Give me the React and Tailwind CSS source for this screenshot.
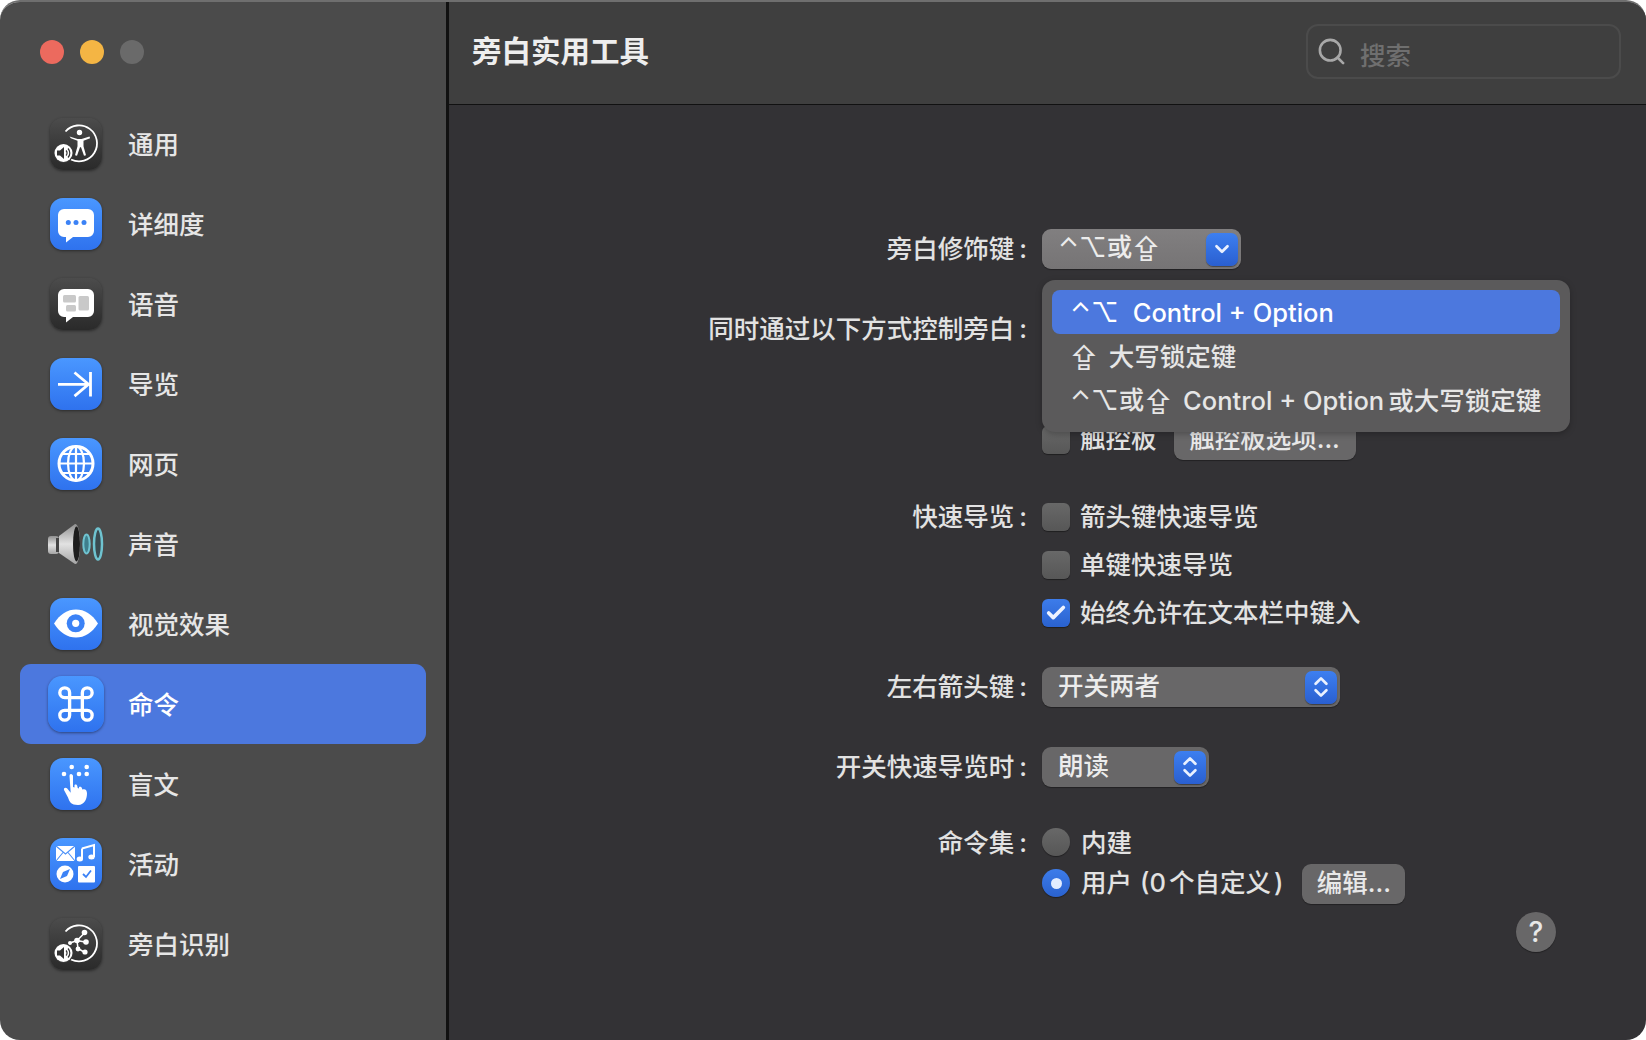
import React from "react";
import { ChevronDown, ChevronsUpDown, Check, Search } from "lucide-react";

const blue = "bg-linear-to-b from-[#4a97ff] to-[#2f72ee]";
const dark = "bg-linear-to-b from-[#4c4c4c] to-[#2a2a2a]";

const Shell = ({ tone, big, children }) => (
  <div className={`${tone} ${big ? "w-[56px] h-[56px] -m-[2px] rounded-[14px]" : "w-[52px] h-[52px] rounded-[13px]"} shrink-0 shadow-[0_1px_3px_rgba(0,0,0,0.45)]`}>
    <svg viewBox="0 0 52 52" className="w-full h-full" fill="none">{children}</svg>
  </div>
);

const Badge = () => (
  <g>
    <circle cx="13.5" cy="35" r="10" fill="#3a3a3a" />
    <circle cx="13.5" cy="35" r="9" fill="#fff" />
    <path d="M7 32.5h3l4-3.5v12l-4-3.5H7z" fill="#333" />
    <path d="M16 32.5a3.5 3.5 0 0 1 0 5M18 30.5a6.5 6.5 0 0 1 0 9" stroke="#333" strokeWidth="1.2" />
  </g>
);

const Ring = () => <path d="M15.5 13.5A18 18 0 1 1 21 41.5" stroke="#fff" strokeWidth="1.8" />;

const IconGeneral = () => (
  <Shell tone={dark}>
    <Ring />
    <circle cx="29.5" cy="14.5" r="2.7" fill="#fff" />
    <path d="M19.500 18.500l8 2.500h4l8-2.500.600 1.800-6.600 2.500v5.500l2.500 9-2 .500-3-8.500h-1l-3 8.500-2-.500 2.500-9v-5.500l-6.600-2.500z" fill="#fff" />
    <Badge />
  </Shell>
);

const Bubble = () => (
  <path d="M14 11h24a6 6 0 0 1 6 6v16a6 6 0 0 1-6 6H23l-7 5.5V39h-2a6 6 0 0 1-6-6V17a6 6 0 0 1 6-6z" fill="#fff" />
);

const IconVerbosity = () => (
  <Shell tone={blue}>
    <Bubble />
    <circle cx="18.3" cy="24.5" r="2.5" fill="#3b82f6" />
    <circle cx="26" cy="24.5" r="2.5" fill="#3b82f6" />
    <circle cx="34" cy="24.5" r="2.5" fill="#3b82f6" />
  </Shell>
);

const IconSpeech = () => (
  <Shell tone={dark}>
    <Bubble />
    <rect x="13" y="17" width="13" height="7.5" rx="1.5" fill="#c9c9c9" />
    <rect x="16" y="27" width="10" height="6.5" rx="1.5" fill="#c9c9c9" />
    <rect x="28.5" y="18" width="10.5" height="14.5" rx="1.5" fill="#c9c9c9" />
  </Shell>
);

const IconNavigation = () => (
  <Shell tone={blue}>
    <path d="M8 26.3h30M24.5 14.5l14 11.8-14 11.8M40.5 14v24.5" stroke="#fff" strokeWidth="2.8" />
  </Shell>
);

const IconWeb = () => (
  <Shell tone={blue}>
    <circle cx="26" cy="25.5" r="17" stroke="#fff" strokeWidth="3" />
    <ellipse cx="26" cy="25.5" rx="8" ry="17" stroke="#fff" strokeWidth="2.2" />
    <path d="M26 8.5v34M9 25.5h34M12 16h28M12 35h28" stroke="#fff" strokeWidth="2.2" />
  </Shell>
);

const IconSound = () => (
  <svg viewBox="0 0 56 42" className="w-[56px] h-[42px] shrink-0 -mx-[2px]" fill="none">
    <defs>
      <linearGradient id="cone" x1="0" y1="0" x2="0" y2="1">
        <stop offset="0" stopColor="#8f8f8f" />
        <stop offset="0.5" stopColor="#e2e2e2" />
        <stop offset="1" stopColor="#a5a5a5" />
      </linearGradient>
    </defs>
    <rect x="0" y="13" width="11" height="18" rx="3" fill="url(#cone)" />
    <rect x="8" y="15" width="4" height="14" fill="#444" />
    <path d="M11 13L27 1c3-1 5 9 5 20s-2 21-5 20L11 30z" fill="url(#cone)" />
    <ellipse cx="28.500" cy="21" rx="3.500" ry="17.500" fill="#1d1d1d" />
    <ellipse cx="38.500" cy="21" rx="3.200" ry="9.500" fill="#3f7f8c" stroke="#6fc3d0" strokeWidth="2" />
    <ellipse cx="50" cy="21" rx="4" ry="15.500" fill="#3a4a50" stroke="#6fc3d0" strokeWidth="2.500" />
  </svg>
);

const IconVisual = () => (
  <Shell tone={blue}>
    <path d="M4 25.5C10 16 17.5 11.5 26 11.5s16 4.500 22 14c-6 9.500-13.500 14-22 14s-16-4.500-22-14z" fill="#fff" />
    <circle cx="25.700" cy="25.300" r="9" fill="#3b82f6" />
    <circle cx="25.700" cy="25.300" r="3.600" fill="#fff" />
  </Shell>
);

const IconCommands = () => (
  <Shell tone={blue} big>
    <path d="M21.500 21.500h13v13h-13zM21.500 21.500h-5a5 5 0 1 1 5-5zM34.500 21.500v-5a5 5 0 1 1 5 5zM34.500 34.500h5a5 5 0 1 1-5 5zM21.500 34.500v5a5 5 0 1 1-5-5z" transform="translate(.500 .500) scale(0.91)" stroke="#fff" strokeWidth="3.400" />
  </Shell>
);

const IconBraille = () => (
  <Shell tone={blue}>
    {[[21.7, 9], [36.7, 9], [14, 16], [29, 16], [36.7, 16]].map(([x, y]) => (
      <circle key={x + "" + y} cx={x} cy={y} r="2.300" fill="#fff" />
    ))}
    <path d="M21 16c1 0 2 1 2 2v11l1.500.5V27c1.500-1 2.500 0 2.800 1l.4 2 1.300.5V29c1.500-.8 2.700 0 3 1.300l.3 1.200 1-.2c2-.6 3.700 1 3.700 4 0 5-2 11.700-9 11.700s-8.500-3-10-7.500l-4-7.500c-.5-2 1.500-3 3-1.700l3.700 4.500L19.500 18c0-1.200.5-2 1.500-2z" fill="#fff" />
  </Shell>
);

const IconActivities = () => (
  <Shell tone={blue}>
    <rect x="6" y="8" width="19" height="15" rx="1" fill="#fff" />
    <path d="M6 8l9.500 8L25 8M6 23l7-8.500M25 23l-7-8.500" stroke="#4a90f8" strokeWidth="1.100" />
    <path d="M32 10.500l12-3.500v12" stroke="#fff" strokeWidth="2" />
    <path d="M32 10.500V21" stroke="#fff" strokeWidth="2" />
    <ellipse cx="29.800" cy="21" rx="3.200" ry="2.500" fill="#fff" />
    <ellipse cx="41.500" cy="19" rx="3.200" ry="2.500" fill="#fff" />
    <circle cx="15" cy="36" r="8.500" fill="#fff" />
    <path d="M20 31l-3 7-7 3 3-7z" fill="#3b82f6" />
    <rect x="28" y="28" width="17" height="16.500" rx="1" fill="#fff" />
    <path d="M33 36l3 3 5-6.500" stroke="#3b82f6" strokeWidth="1.800" />
  </Shell>
);

const IconRecognition = () => (
  <Shell tone={dark}>
    <Ring />
    <path d="M20 25l7-2.500 7-7M27 22.500l8 1.500M27 22.500l1 8 6 3.500" stroke="#fff" strokeWidth="1.500" />
    {[[27, 22.500, 2.800], [34.500, 14.500, 2.800], [36, 24, 2.800], [28, 31, 2.400], [35, 34, 2.600], [20, 25, 2]].map(([x, y, r]) => (
      <circle key={x} cx={x} cy={y} r={r} fill="#fff" />
    ))}
    <Badge />
  </Shell>
);

const sidebarItems = [
  { name: "通用", Icon: IconGeneral },
  { name: "详细度", Icon: IconVerbosity },
  { name: "语音", Icon: IconSpeech },
  { name: "导览", Icon: IconNavigation },
  { name: "网页", Icon: IconWeb },
  { name: "声音", Icon: IconSound },
  { name: "视觉效果", Icon: IconVisual },
  { name: "命令", Icon: IconCommands, active: true },
  { name: "盲文", Icon: IconBraille },
  { name: "活动", Icon: IconActivities },
  { name: "旁白识别", Icon: IconRecognition },
];

const Sym = ({ children }) => <span className="font-['Inter'] text-[27px] leading-none font-normal">{children}</span>;

const Checkbox = ({ checked }) => (
  <div className={`w-[28px] h-[28px] rounded-[6px] shrink-0 flex items-center justify-center shadow-[0_1px_1px_rgba(0,0,0,0.4)] bg-linear-to-b ${checked ? "from-[#3d7cea] to-[#2a62cf]" : "from-[#686868] to-[#575757]"}`}>
    {checked && <Check size={22} strokeWidth={4} className="text-[#eef3ff]" />}
  </div>
);

const Radio = ({ checked }) => (
  <div className={`w-[28px] h-[28px] rounded-full shrink-0 mb-0.5 flex items-center justify-center shadow-[0_1px_1px_rgba(0,0,0,0.4)] bg-linear-to-b ${checked ? "from-[#3d7cea] to-[#2a62cf]" : "from-[#686868] to-[#575757]"}`}>
    {checked && <div className="w-[11px] h-[11px] rounded-full bg-[#e2ecff]" />}
  </div>
);

const Button = ({ children, className = "" }) => (
  <div className={`h-10 rounded-[9px] bg-[#686768] flex items-center justify-center text-[#e8e8e8] shadow-[0_1px_1px_rgba(0,0,0,0.35)] ${className}`}>
    <span className="-mt-0.5">{children}</span>
  </div>
);

const Select = ({ value, width, open }) => (
  <div className={`${width} ${open ? "bg-linear-to-b from-[#817f80] to-[#767475]" : "bg-[#686768]"} h-10 rounded-[9px] flex items-center justify-between pl-[16px] pr-[3.500px] shadow-[0_1px_1px_rgba(0,0,0,0.35)]`}>
    <span className={`text-[#ececec] flex items-center ${open ? "-mt-1" : "-mt-0.5"}`}>{value}</span>
    <div className="w-[32px] h-[33px] rounded-[7px] bg-linear-to-b from-[#3d7ff0] to-[#2a5fd0] flex items-center justify-center shadow-[0_1px_1px_rgba(0,0,0,0.4)]">
      {open ? <ChevronDown size={22} strokeWidth={3} className="text-[#eaf1ff]" /> : <ChevronsUpDown size={26} strokeWidth={2.500} className="text-[#eaf1ff]" />}
    </div>
  </div>
);

const Label = ({ text, leading }) => (
  <div className={`w-[581px] shrink-0 text-right text-[#e2e2e2] pr-[3px] ${leading}`}>
    {text}<span className="ml-[5px]">:</span>
  </div>
);

const Row = ({ label, className = "", children }) => (
  <div className={`flex ${className}`}>
    <Label text={label} leading="leading-10" />
    <div className="ml-3">{children}</div>
  </div>
);

const Item = ({ checked, children }) => (
  <div className="flex items-center gap-[10px] h-[28px] text-[#e2e2e2]">
    <Checkbox checked={checked} />
    <span className="pt-px">{children}</span>
  </div>
);

export default function App() {
  return (
    <div className="w-[1646px] h-[1040px] bg-white font-['Inter','Noto_Sans_CJK_SC',sans-serif] text-[25.500px] font-medium">
      <div className="w-full h-full flex rounded-[20px] overflow-hidden border-t-2 border-[#6f6f6f]">
        <aside className="w-[449px] shrink-0 bg-[#4b4b4b] border-r-[3px] border-[#111] px-5 pt-[38px]">
          <div className="flex gap-4 pl-5 mb-10">
            <div className="w-6 h-6 rounded-full bg-[#ec6a5e]" />
            <div className="w-6 h-6 rounded-full bg-[#f4b544]" />
            <div className="w-6 h-6 rounded-full bg-[#6a6a6a]" />
          </div>
          {sidebarItems.map(({ name, Icon, active }) => (
            <div key={name} className={`h-20 flex items-center pl-[30px] gap-[26px] rounded-[11px] ${active ? "bg-[#4c78de] text-white" : "text-[#e6e6e6]"}`}>
              <Icon />
              <span className="pt-[3px]">{name}</span>
            </div>
          ))}
        </aside>

        <main className="flex-1 bg-[#333235] flex flex-col">
          <header className="h-[103px] shrink-0 bg-[#3f3f3f] border-b border-[#111] flex items-center justify-between pl-[23px] pr-[25px] pb-1">
            <h1 className="text-[29.500px] font-bold text-[#eeeeee]">旁白实用工具</h1>
            <div className="w-[315px] h-[55px] rounded-[12px] border-2 border-[#4b4b4b] flex items-center pl-[8px] gap-[13px]">
              <Search size={31} strokeWidth={2} className="text-[#a8a8a8]" />
              <span className="text-[#6f6f6f] pt-2.5">搜索</span>
            </div>
          </header>

          <div className="relative flex-1 pt-[124px]">
            <Row label="旁白修饰键">
              <Select width="w-[199px]" open value={<><Sym>⌃⌥</Sym>或<Sym>⇪</Sym></>} />
            </Row>

            <Row label="同时通过以下方式控制旁白" className="mt-10">
              <div className="pt-[111px] flex items-center gap-[9px] text-[#e2e2e2]">
                <Checkbox />
                <span className="ml-px -mt-0.5">触控板</span>
                <Button className="w-[182px] ml-[8px]">触控板选项...</Button>
              </div>
            </Row>

            <div className="absolute left-[593px] top-[175px] w-[528px] h-[152px] rounded-[13px] bg-[#5b5a5b] p-[10px] text-[#e6e6e6] shadow-[0_2px_6px_rgba(0,0,0,0.25)]">
              <div className="h-11 rounded-[8px] bg-[#4c78de] text-white flex items-center pl-[18px] gap-[14px]">
                <Sym>⌃⌥</Sym>
                <span className="pt-0.5">Control + Option</span>
              </div>
              <div className="h-11 flex items-center pl-[18px] gap-[11px]">
                <Sym>⇪</Sym>
                <span className="pt-0.5">大写锁定键</span>
              </div>
              <div className="h-11 flex items-center pl-[18px] gap-[11px]">
                <span className="flex items-center"><Sym>⌃⌥</Sym>或<Sym>⇪</Sym></span>
                <span className="pt-0.5">Control + Option<span className="ml-1">或大写锁定键</span></span>
              </div>
            </div>

            <div className="flex mt-[43px]">
              <Label text="快速导览" leading="leading-7" />
              <div className="ml-3 flex flex-col gap-5">
                <Item>箭头键快速导览</Item>
                <Item>单键快速导览</Item>
                <Item checked>始终允许在文本栏中键入</Item>
              </div>
            </div>

            <Row label="左右箭头键" className="mt-10">
              <Select width="w-[298px]" value="开关两者" />
            </Row>

            <Row label="开关快速导览时" className="mt-10">
              <Select width="w-[167px]" value="朗读" />
            </Row>

            <div className="flex mt-[42px]">
              <Label text="命令集" leading="leading-7" />
              <div className="ml-3 text-[#e2e2e2]">
                <div className="flex items-center gap-[11px] h-[28px]">
                  <Radio />
                  <span>内建</span>
                </div>
                <div className="flex items-center gap-[11px] mt-[7px]">
                  <Radio checked />
                  <span className="-mt-0.5">用户<span className="ml-2">(0</span><span className="ml-[3px]">个自定义</span><span className="ml-[3px]">)</span></span>
                  <Button className="w-[103px] ml-2">编辑...</Button>
                </div>
              </div>
            </div>

            <div className="flex justify-end pr-[90px] mt-2">
              <div className="w-10 h-10 rounded-full bg-[#686768] flex items-center justify-center text-[#e8e8e8] text-[28px] shadow-[0_1px_1px_rgba(0,0,0,0.35)]">?</div>
            </div>
          </div>
        </main>
      </div>
    </div>
  );
}
